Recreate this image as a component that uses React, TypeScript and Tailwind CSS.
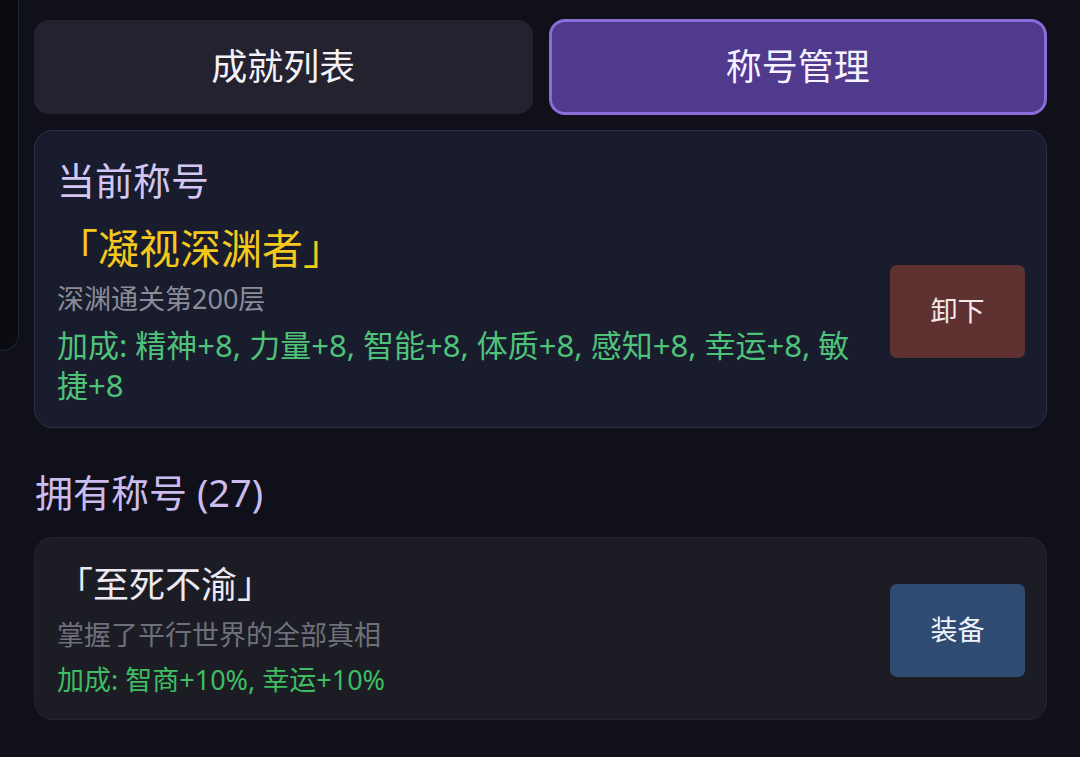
import React from "react";

const font = { fontFamily: '"Noto Sans", "Noto Sans CJK SC", sans-serif' };

const current = {
  name: "凝视深渊者",
  desc: "深渊通关第200层",
  bonus: "加成: 精神+8, 力量+8, 智能+8, 体质+8, 感知+8, 幸运+8, 敏捷+8",
};

const owned = [
  { name: "至死不渝", desc: "掌握了平行世界的全部真相", bonus: "加成: 智商+10%, 幸运+10%" },
];

export default function App() {
  return (
    <div className="flex h-[757px] w-[1080px] overflow-hidden bg-[#0f1019]" style={font}>
      {/* edge of the panel behind, cut off by the screen */}
      <div className="h-[351px] w-[19px] shrink-0 rounded-br-[16px] border-r border-b border-[#1d2626] bg-[#0b0c12]" />

      <div className="ml-[15px] flex w-[1013px] flex-col pt-[19px]">
        <div className="grid grid-cols-2 gap-4">
          <button className="mt-[1px] flex h-[94px] items-center justify-center self-start rounded-[15px] bg-[#24222f] text-[36px] text-[#f4f2f8]">
            成就列表
          </button>
          <button className="flex h-[96px] items-center justify-center rounded-[16px] border-[3px] border-[#8b6cdb] bg-[#4f3a8e] text-[36px] text-[#f6f2ff]">
            称号管理
          </button>
        </div>

        <div className="mt-[15px] rounded-[18px] border border-[#2b3145] bg-[#181c2d] pt-[23px] pr-[21px] pb-[22px] pl-[22px]">
          <div className="text-[38px] leading-[53px] text-[#d3c6f3]">当前称号</div>
          <div className="mt-[10px] flex items-center gap-6">
            <div className="min-w-0 flex-1">
              <div className="text-[41px] leading-[63px] text-[#f4c81c]">「{current.name}」</div>
              <div className="text-[27px] leading-[38px] text-[#8a8c98]">{current.desc}</div>
              <div className="mt-[7px] max-w-[812px] text-[31px] leading-[40px] text-[#4fc27a]">{current.bonus}</div>
            </div>
            <button className="flex h-[93px] w-[135px] shrink-0 items-center justify-center rounded-[7px] bg-[#5f3131] text-[27px] text-[#f6eaea]">
              卸下
            </button>
          </div>
        </div>

        <div className="mt-[38px] pl-[1px] text-[38px] leading-[53px] text-[#cbbcf0]">
          拥有称号 ({27})
        </div>

        {owned.map((t) => (
          <div
            key={t.name}
            className="mt-[18px] flex items-center gap-6 rounded-[18px] border border-[#25252e] bg-[#1c1c24] pt-[22px] pr-[21px] pb-[19px] pl-[22px]"
          >
            <div className="min-w-0 flex-1">
              <div className="text-[36px] leading-[50px] text-[#ece9f3]">「{t.name}」</div>
              <div className="mt-[6px] text-[27px] leading-[38px] text-[#6e707c]">{t.desc}</div>
              <div className="mt-[6px] text-[27px] leading-[40px] text-[#3ebd62]">{t.bonus}</div>
            </div>
            <button className="flex h-[93px] w-[135px] shrink-0 items-center justify-center rounded-[7px] bg-[#2f4b72] text-[27px] text-[#eef3fa]">
              装备
            </button>
          </div>
        ))}
      </div>
    </div>
  );
}
